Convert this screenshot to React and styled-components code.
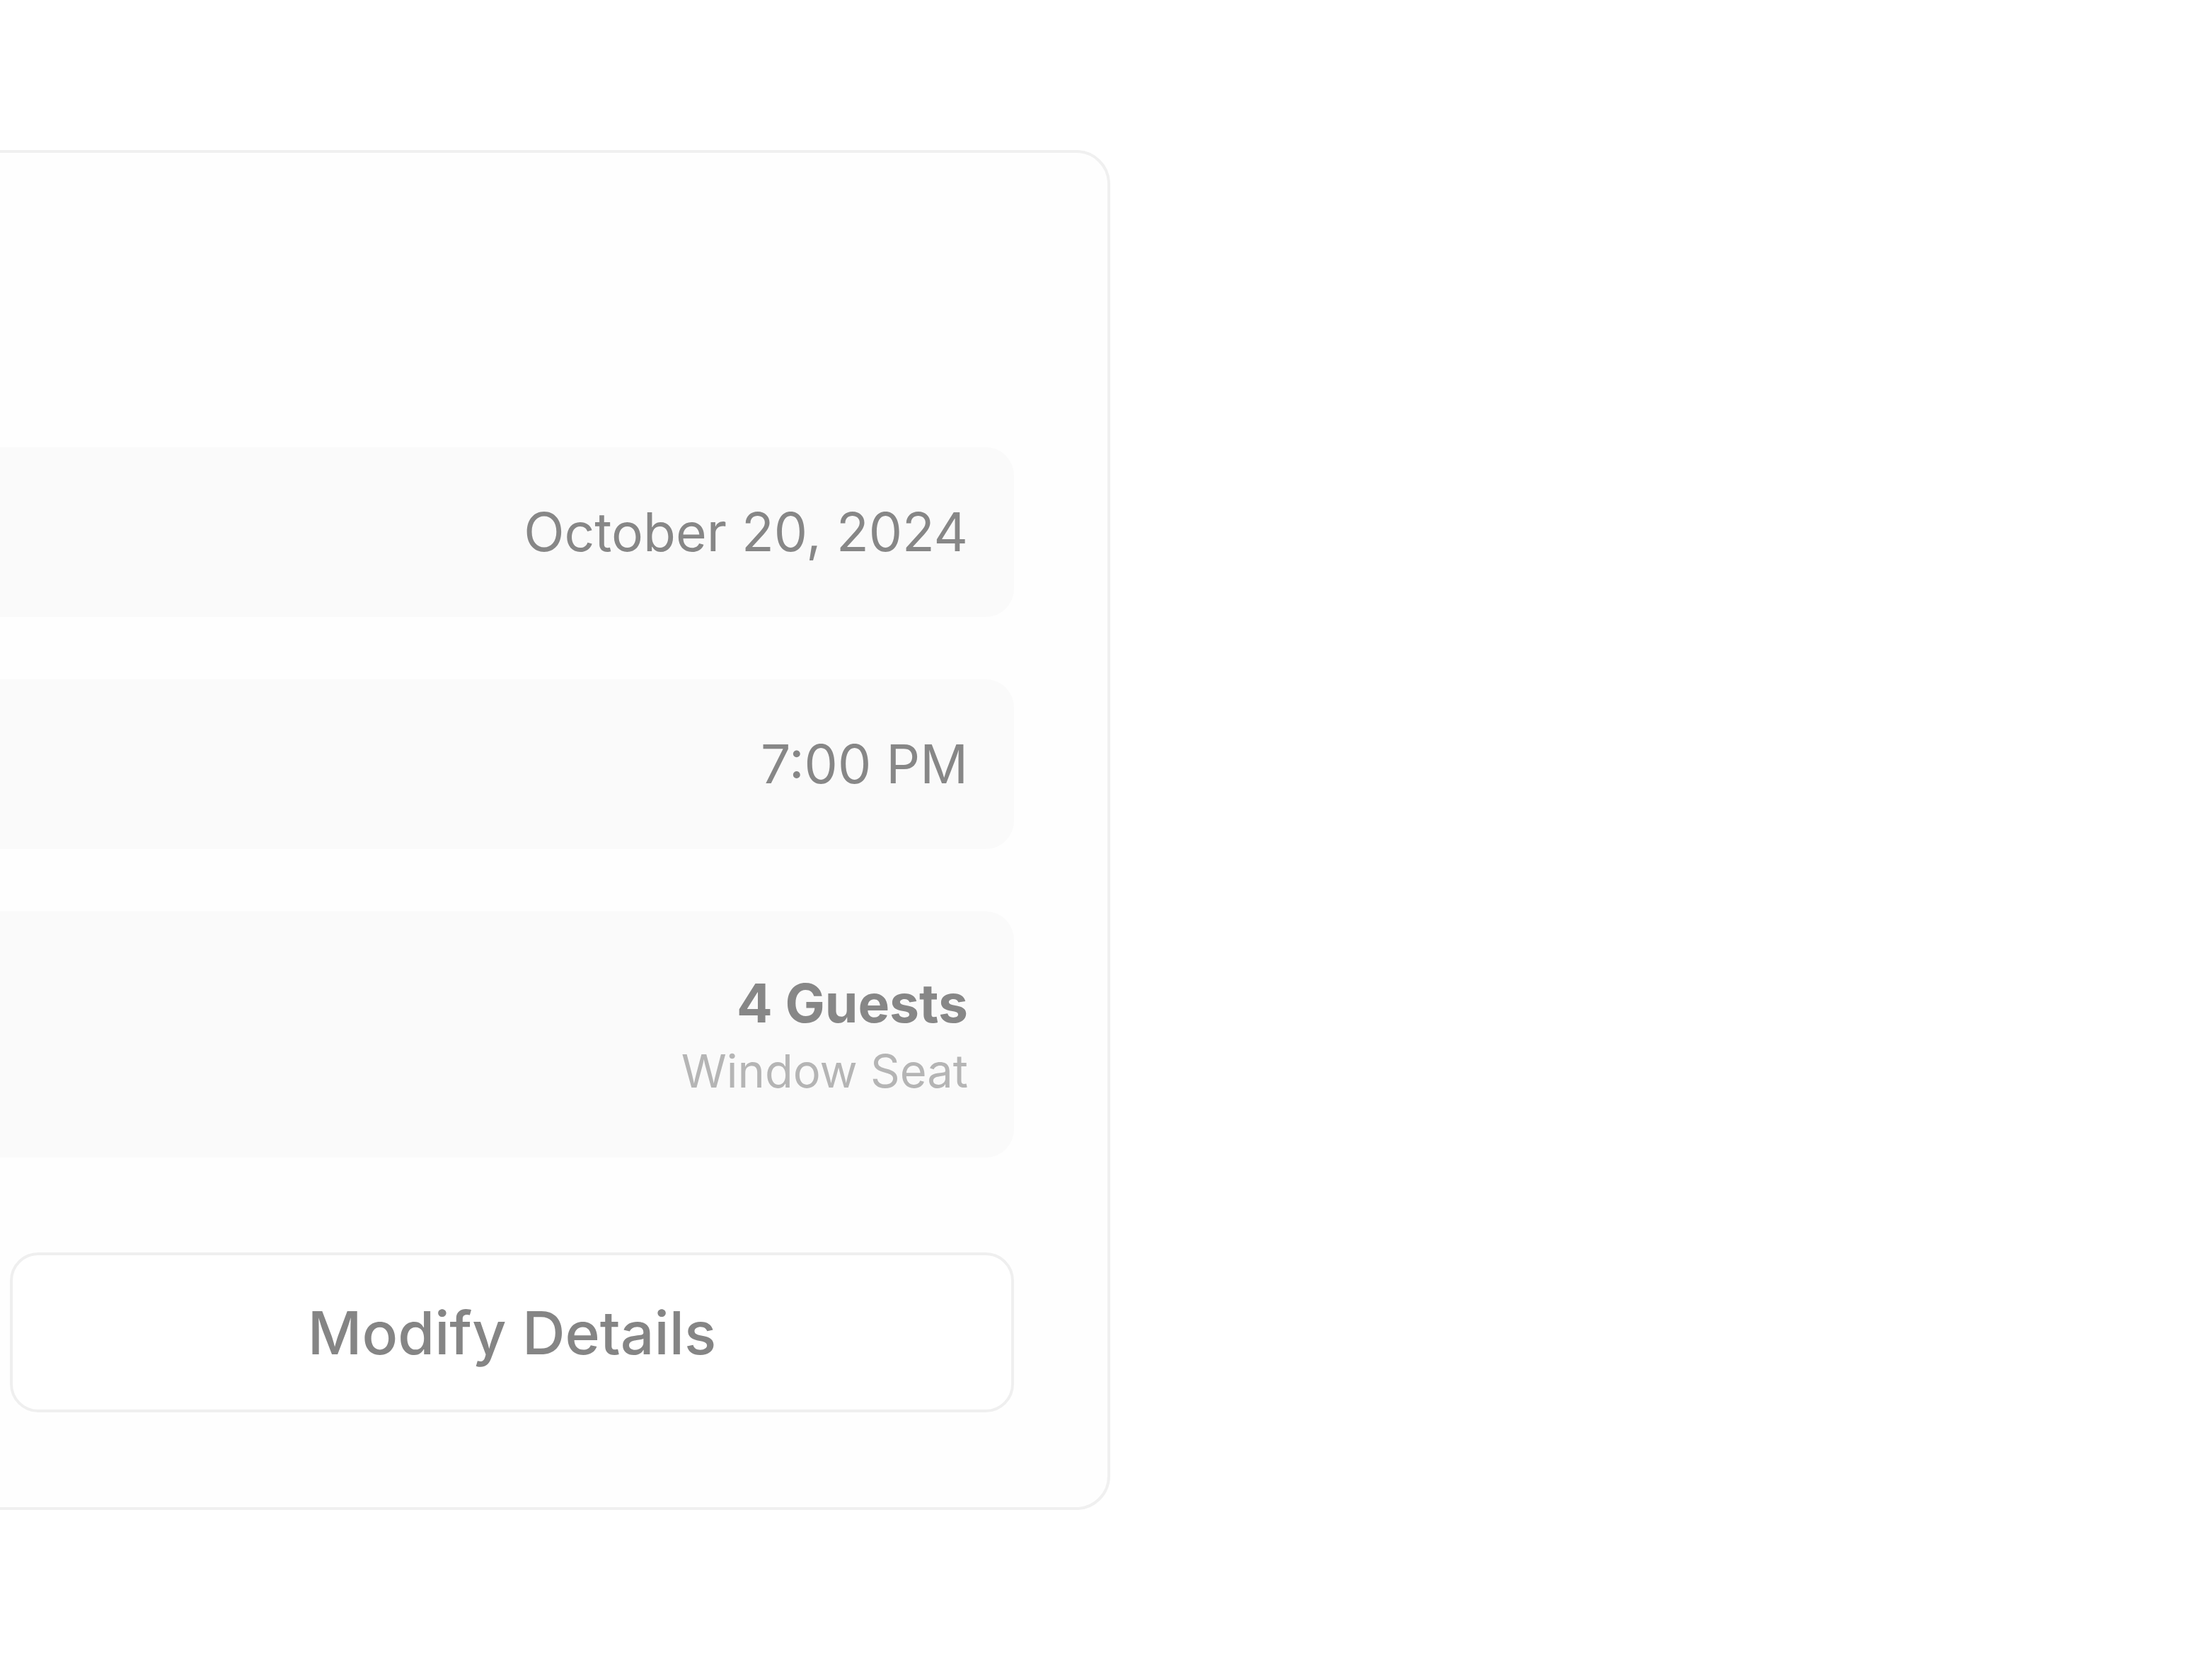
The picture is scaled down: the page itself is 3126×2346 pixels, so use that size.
import React from "react";
import styled, { createGlobalStyle } from "styled-components";

const Global = createGlobalStyle`
  html, body {
    margin: 0;
    padding: 0;
    background: #ffffff;
    font-family: Inter, "Noto Sans", "Liberation Sans", sans-serif;
  }
  * { box-sizing: border-box; }
`;

const Page = styled.div`
  display: flex;
  align-items: flex-start;
  padding-top: 212px;
  min-height: 2346px;
`;

const Card = styled.section`
  flex: none;
  margin-left: -1573px;
  width: 3142px;
  border: 4px solid #f0f0f0;
  border-radius: 48px;
  background: #fefefe;
  padding: 128px 132px 134px;
  display: flex;
  flex-direction: column;
`;

const Header = styled.header`
  height: 288px;
`;

const Rows = styled.div`
  display: flex;
  flex-direction: column;
  gap: 88px;
`;

const Row = styled.div`
  display: flex;
  align-items: center;
  justify-content: flex-end;
  height: ${(p) => p.$h}px;
  padding: 0 65px;
  border-radius: 40px;
  background: #fafafa;
`;

const Value = styled.div`
  font-size: 75px;
  line-height: 112px;
  color: #878787;
  text-align: right;
  white-space: nowrap;
`;

const Stack = styled.div`
  display: flex;
  flex-direction: column;
  align-items: flex-end;
  margin-bottom: 8px;
`;

const Strong = styled(Value)`
  font-weight: 700;
`;

const Sub = styled.div`
  font-size: 65px;
  line-height: 80px;
  color: #b5b5b5;
  white-space: nowrap;
`;

const Actions = styled.div`
  display: flex;
  justify-content: flex-end;
  margin-top: 134px;
`;

const Button = styled.button`
  width: 1419px;
  height: 226px;
  border: 4px solid #efefef;
  border-radius: 40px;
  background: #ffffff;
  font-family: Inter, "Noto Sans", "Liberation Sans", sans-serif;
  font-size: 84px;
  font-weight: 500;
  color: #858585;
  cursor: pointer;
`;

export default function App() {
  return (
    <>
      <Global />
      <Page>
        <Card>
          <Header />
          <Rows>
            <Row $h={240}>
              <Value>October 20, 2024</Value>
            </Row>
            <Row $h={240}>
              <Value>7:00 PM</Value>
            </Row>
            <Row $h={348}>
              <Stack>
                <Strong>4 Guests</Strong>
                <Sub>Window Seat</Sub>
              </Stack>
            </Row>
          </Rows>
          <Actions>
            <Button type="button">Modify Details</Button>
          </Actions>
        </Card>
      </Page>
    </>
  );
}
